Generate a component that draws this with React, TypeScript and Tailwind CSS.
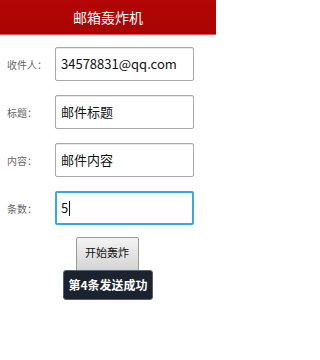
export default function App() {
  const font = { fontFamily: '"Noto Sans CJK SC", Roboto, sans-serif' };
  const rows = [
    { label: "收件人：", value: "34578831@qq.com" },
    { label: "标题：", value: "邮件标题" },
    { label: "内容：", value: "邮件内容" },
  ];

  return (
    <div className="relative h-[360px] w-[216px] overflow-hidden bg-white" style={font}>
      <header className="flex h-[35px] items-center justify-center border-b border-[#d9575a] bg-gradient-to-b from-[#b30606] to-[#a80303]">
        <h1 className="text-[14px] leading-none text-white">邮箱轰炸机</h1>
      </header>

      <div className="flex flex-col gap-[14px] pt-[12px]">
        {rows.map((r) => (
          <div key={r.label} className="flex items-center">
            <span className="w-[55px] pl-[7px] text-[10px] text-[#666]">{r.label}</span>
            <div className="flex h-[34px] w-[139px] items-center rounded-[2px] border border-[#a8a8a8] bg-white px-[5px] text-[13px] text-[#111] shadow-[inset_0_1px_1px_rgba(0,0,0,0.1)]">
              {r.value}
            </div>
          </div>
        ))}
        <div className="flex items-center">
          <span className="w-[55px] pl-[7px] text-[10px] text-[#666]">条数：</span>
          <div className="flex h-[34px] w-[139px] items-center rounded-[2px] border-2 border-[#35a9e2] bg-white px-[4px] text-[13px] text-[#111]">
            5<span className="ml-[1px] inline-block h-[15px] w-px bg-[#111]" />
          </div>
        </div>
      </div>

      <div className="mt-[12px] flex flex-col items-center">
        <button className="ml-[-2px] h-[36px] w-[63px] rounded-[2px] border border-[#9a9a9a] bg-gradient-to-b from-[#f4f4f4] to-[#d2d2d2] pb-[6px] text-[11px] text-[#111]">
          开始轰炸
        </button>
        <div className="mt-[-3px] flex h-[30px] w-[90px] items-center justify-center rounded-[3px] border border-[#56606c] bg-[#1b2330] text-[12px] font-bold text-white">
          第4条发送成功
        </div>
      </div>
    </div>
  );
}
